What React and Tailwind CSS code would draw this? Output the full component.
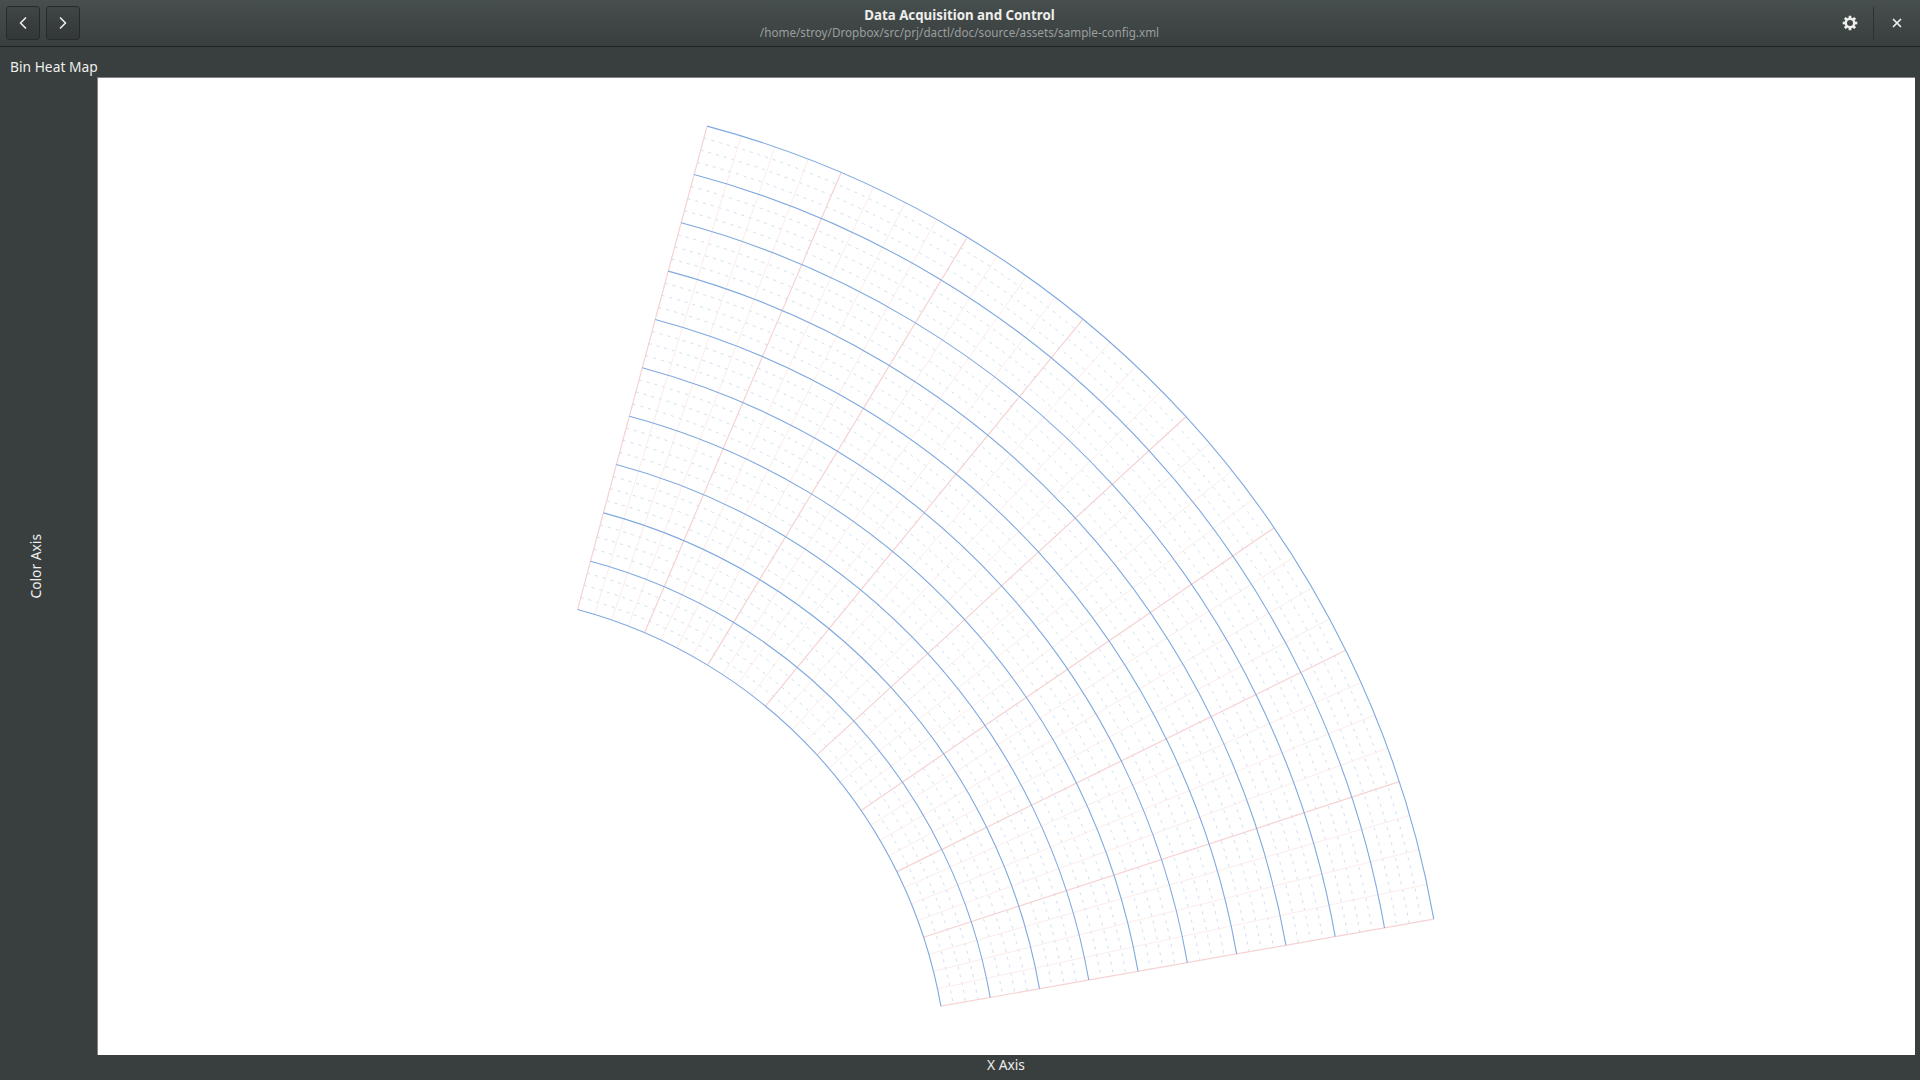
import { ChevronLeft, ChevronRight, X } from 'lucide-react';

// polar grid geometry, in page pixels
const CX = 448;
const CY = 1093;
const R_MIN = 500.5;
const R_MAX = 1001;
const A_MIN = 10;
const A_MAX = 75;

const pt = (r, deg) => {
    const a = (deg * Math.PI) / 180;
    return [CX + r * Math.cos(a), CY - r * Math.sin(a)];
};

const arc = (r) => {
    const [x1, y1] = pt(r, A_MAX);
    const [x2, y2] = pt(r, A_MIN);
    return `M${x1} ${y1}A${r} ${r} 0 0 1 ${x2} ${y2}`;
};

const spoke = (deg) => {
    const [x1, y1] = pt(R_MIN, deg);
    const [x2, y2] = pt(R_MAX, deg);
    return `M${x1} ${y1}L${x2} ${y2}`;
};

function gearPath() {
    const teeth = 8;
    const c = 8;
    let d = '';
    for (let i = 0; i < teeth; i++) {
        const a = (i * 2 * Math.PI) / teeth;
        const corners = [
            [5.3, -0.3],
            [7.4, -0.17],
            [7.4, 0.17],
            [5.3, 0.3],
        ];
        corners.forEach(([r, o], j) => {
            const x = c + r * Math.cos(a + o);
            const y = c + r * Math.sin(a + o);
            d += `${i === 0 && j === 0 ? 'M' : 'L'}${x.toFixed(2)} ${y.toFixed(2)}`;
        });
    }
    return `${d}ZM${c - 3} ${c}a3 3 0 1 0 6 0a3 3 0 1 0 -6 0Z`;
}

function HeatMapGrid() {
    const majorR = [];
    const minorR = [];
    for (let i = 0; i <= 40; i++) {
        const r = R_MIN + ((R_MAX - R_MIN) * i) / 40;
        (i % 4 === 0 ? majorR : minorR).push(r);
    }
    const majorA = [];
    const minorA = [];
    for (let i = 0; i <= 32; i++) {
        const a = A_MAX - ((A_MAX - A_MIN) * i) / 32;
        (i % 4 === 0 ? majorA : minorA).push(a);
    }

    return (
        <svg className="block w-full h-full" viewBox="98 78 1817 977" fill="none">
            {minorR.map((r) => (
                <path key={r} d={arc(r)} stroke="#cfdef2" strokeWidth="1" strokeDasharray="3 5" />
            ))}
            {minorA.map((a) => (
                <path key={a} d={spoke(a)} stroke="#fcecec" strokeWidth="1" />
            ))}
            {majorA.map((a) => (
                <path key={a} d={spoke(a)} stroke="#f6d2d2" strokeWidth="1.2" />
            ))}
            {majorR.map((r) => (
                <path key={r} d={arc(r)} stroke="#80a9de" strokeWidth="1.1" />
            ))}
        </svg>
    );
}

function NavButton({ children }) {
    return (
        <button className="flex items-center justify-center w-[34px] h-[34px] rounded-[3px] border border-[#262a2a] bg-gradient-to-b from-[#3f4646] to-[#323737] text-[#eeeeec]">
            {children}
        </button>
    );
}

export default function App() {
    return (
        <div className="flex flex-col w-[1920px] h-[1080px] overflow-hidden bg-[#393f3f] text-[#eeeeec] font-['Noto_Sans',sans-serif] text-[14px]">
            <header className="flex items-center h-[47px] shrink-0 border-b border-[#1f2222] bg-gradient-to-b from-[#474e4e] to-[#393f3f]">
                <div className="flex items-center gap-[6px] pl-[6px] w-[300px]">
                    <NavButton><ChevronLeft size={20} strokeWidth={2} /></NavButton>
                    <NavButton><ChevronRight size={20} strokeWidth={2} /></NavButton>
                </div>
                <div className="flex flex-1 flex-col items-center pt-[1px] pr-[1px]">
                    <div className="text-[13.3px] leading-[18px] font-bold">Data Acquisition and Control</div>
                    <div className="text-[11.7px] leading-[17px] text-[#9a9f9f]">/home/stroy/Dropbox/src/prj/dactl/doc/source/assets/sample-config.xml</div>
                </div>
                <div className="flex items-center justify-end w-[300px]">
                    <svg width="16" height="16" viewBox="0 0 16 16" className="mr-[15px]">
                        <path d={gearPath()} fill="#eeeeec" fillRule="evenodd" />
                    </svg>
                    <div className="w-px h-[33px] bg-[#2d3131]" />
                    <div className="flex items-center justify-center w-[46px]">
                        <X size={14} strokeWidth={3} />
                    </div>
                </div>
            </header>
            <div className="flex items-center h-[30px] shrink-0 pl-[10px] pt-[10px] text-[13.8px]">Bin Heat Map</div>
            <main className="flex flex-1 min-h-0">
                <div className="flex items-center justify-center w-[97px] shrink-0 pr-[24px]">
                    <span className="[writing-mode:vertical-rl] rotate-180 text-[13.8px]">Color Axis</span>
                </div>
                <div className="flex-1 min-w-0 bg-white border-l border-t border-[#7f8484]">
                    <HeatMapGrid />
                </div>
                <div className="w-[5px] shrink-0" />
            </main>
            <footer className="flex items-center justify-center h-[25px] shrink-0 pl-[92px] pb-[4px] text-[13.8px]">X Axis</footer>
        </div>
    );
}
